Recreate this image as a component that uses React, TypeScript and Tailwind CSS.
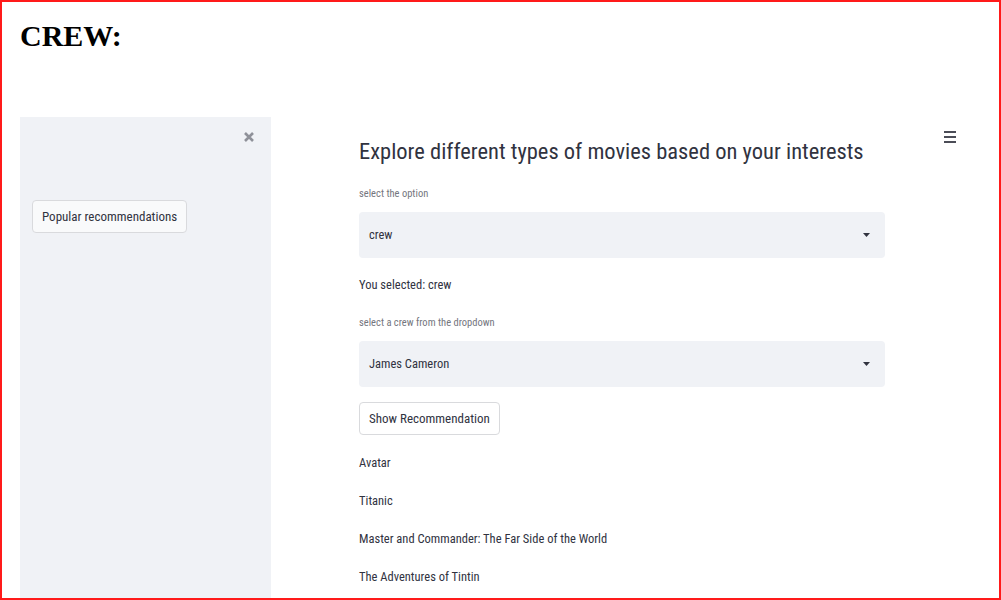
import { useState } from 'react';

const movies = [
  'Avatar',
  'Titanic',
  'Master and Commander: The Far Side of the World',
  'The Adventures of Tintin',
];

function Caret() {
  return (
    <svg className="h-[4px] w-[7px]" viewBox="0 0 7 4" fill="currentColor">
      <path d="M0 0h7L3.5 4z" />
    </svg>
  );
}

function SelectBox({ label, value }: { label: string; value: string }) {
  return (
    <div className="flex flex-col">
      <span className="text-[10.5px] leading-[14px] text-[#74767e]">{label}</span>
      <div className="mt-[11px] flex h-[46px] items-center justify-between rounded-[4px] bg-[#f0f2f6] pl-[10px] pr-[15px] text-[12.5px] text-[#31333f]">
        <span>{value}</span>
        <Caret />
      </div>
    </div>
  );
}

export default function App() {
  const [crew] = useState('crew');

  return (
    <div className="flex h-[600px] w-[1001px] flex-col overflow-hidden border-2 border-[#ff1a1a] bg-white">
      {/* Page heading */}
      <h1 className="pl-[18px] pt-[16px] font-['Liberation_Serif',serif] text-[30px] font-bold leading-[36px] text-black">
        CREW:
      </h1>

      {/* Embedded app */}
      <div className="mt-[63px] flex flex-1 font-['Roboto_Condensed',sans-serif] text-[#31333f]">
        {/* Sidebar */}
        <aside className="ml-[18px] flex w-[251px] flex-col bg-[#f0f2f6]">
          <div className="flex justify-end pr-[17px] pt-[15px]">
            <svg className="h-[10px] w-[10px] text-[#8f9199]" viewBox="0 0 10 10" fill="none" stroke="currentColor" strokeWidth={2.6}>
              <path d="M1 1l8 8M9 1L1 9" />
            </svg>
          </div>
          <div className="pl-[12px] pt-[58px]">
            <button className="h-[33px] rounded-[4px] border border-[#d9dadd] bg-[#f9fafb] px-[9px] text-[13px] text-[#31333f]">
              Popular recommendations
            </button>
          </div>
        </aside>

        {/* Main */}
        <main className="flex flex-1 justify-between pl-[88px] pr-[43px]">
          <div className="flex w-[526px] flex-col">
            <h2 className="mt-[18px] whitespace-nowrap text-[22.5px] font-normal leading-[32px] text-[#31333f]">
              Explore different types of movies based on your interests
            </h2>
            <div className="mt-[20px]">
              <SelectBox label="select the option" value={crew} />
            </div>
            <p className="mt-[19px] text-[12.5px] leading-[16px]">You selected: {crew}</p>
            <div className="mt-[23px]">
              <SelectBox label="select a crew from the dropdown" value="James Cameron" />
            </div>
            <div className="mt-[15px]">
              <button className="h-[33px] rounded-[4px] border border-[#d9dadd] bg-white px-[9px] text-[13px] text-[#31333f]">
                Show Recommendation
              </button>
            </div>
            <ul className="mt-[20px] flex flex-col gap-[22px] text-[12.5px] leading-[16px]">
              {movies.map((m) => (
                <li key={m}>{m}</li>
              ))}
            </ul>
          </div>
          <div className="pt-[14px]">
            <svg className="h-[12px] w-[12px] text-[#4b4d57]" viewBox="0 0 12 12" fill="currentColor">
              <rect x="0" y="0" width="12" height="2" />
              <rect x="0" y="5" width="12" height="2" />
              <rect x="0" y="10" width="12" height="2" />
            </svg>
          </div>
        </main>
      </div>
    </div>
  );
}
